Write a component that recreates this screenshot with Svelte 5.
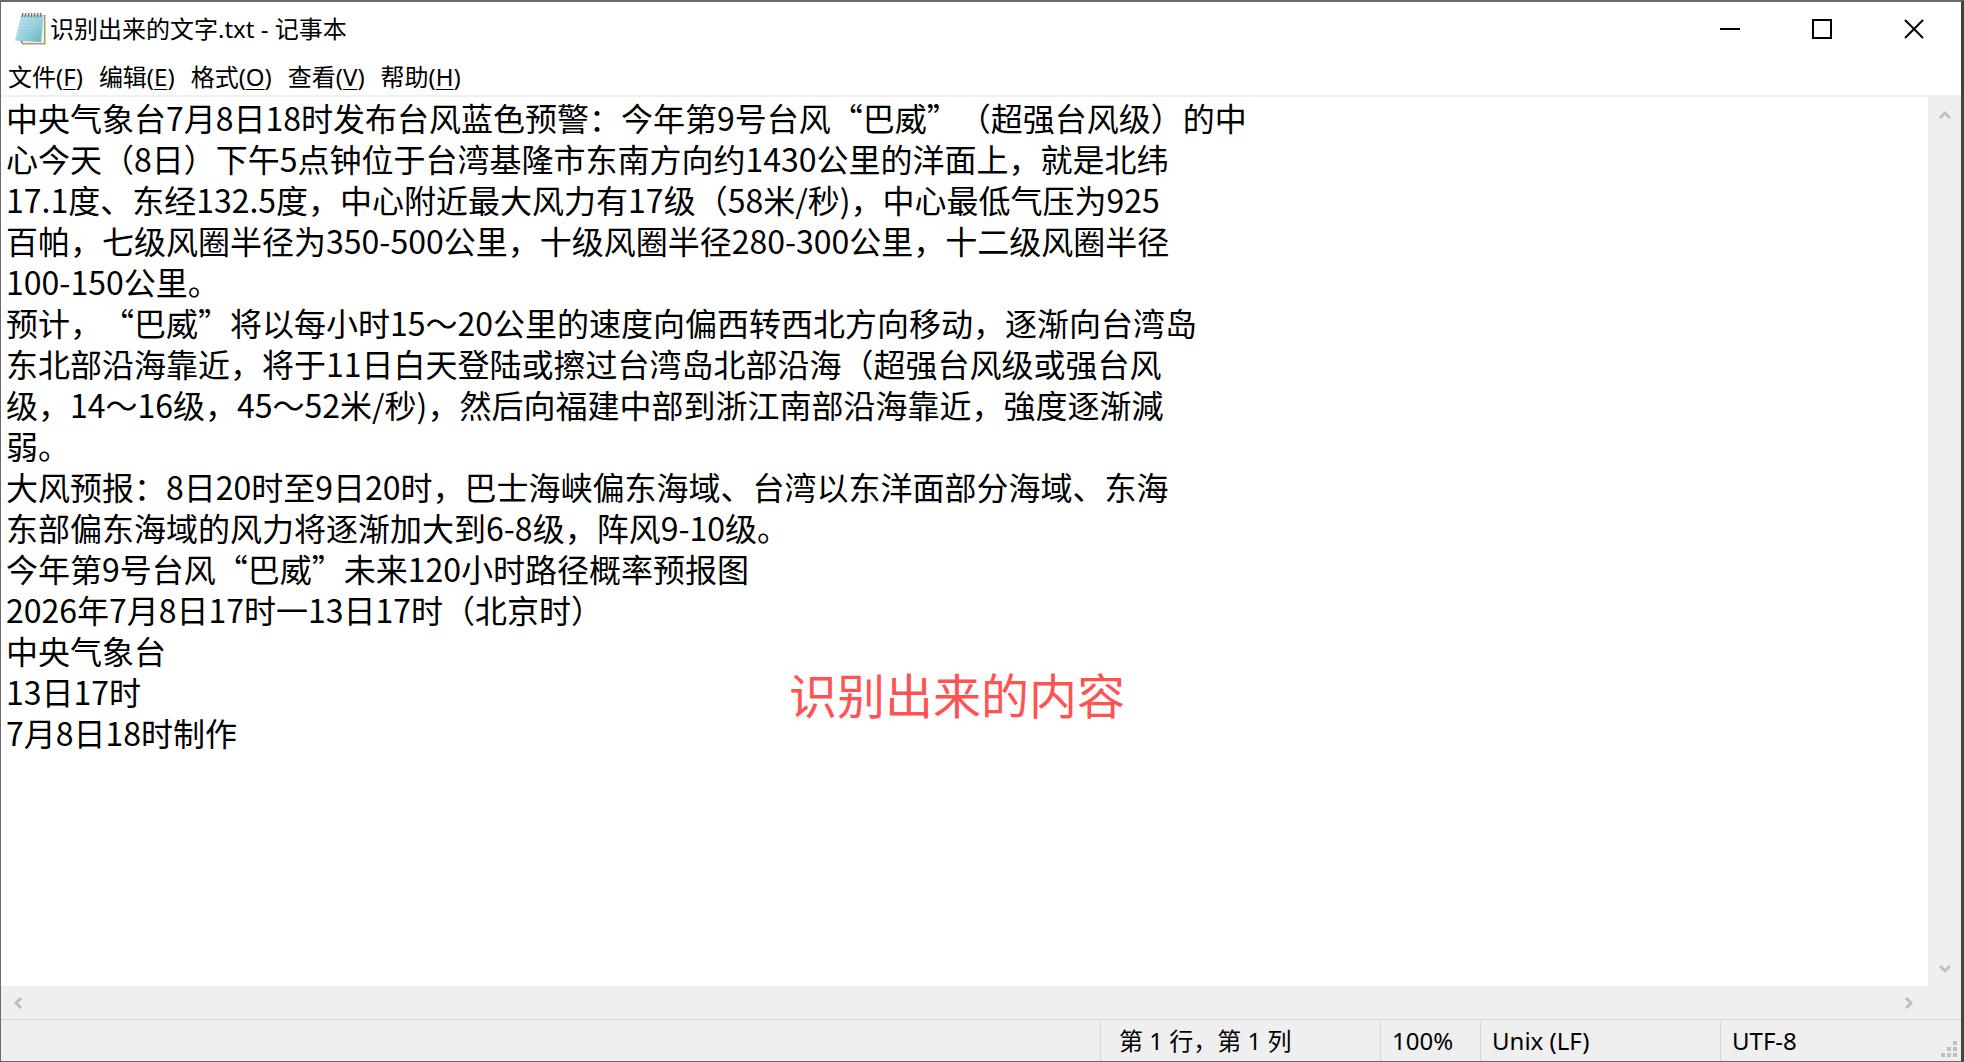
<script lang="ts">
	const menus = [
		{ label: '文件', key: 'F' },
		{ label: '编辑', key: 'E' },
		{ label: '格式', key: 'O' },
		{ label: '查看', key: 'V' },
		{ label: '帮助', key: 'H' }
	];

	let content = [
		'中央气象台7月8日18时发布台风蓝色预警：今年第9号台风“巴威”（超强台风级）的中',
		'心今天（8日）下午5点钟位于台湾基隆市东南方向约1430公里的洋面上，就是北纬',
		'17.1度、东经132.5度，中心附近最大风力有17级（58米/秒)，中心最低气压为925',
		'百帕，七级风圈半径为350-500公里，十级风圈半径280-300公里，十二级风圈半径',
		'100-150公里。',
		'预计，“巴威”将以每小时15～20公里的速度向偏西转西北方向移动，逐渐向台湾岛',
		'东北部沿海靠近，将于11日白天登陆或擦过台湾岛北部沿海（超强台风级或强台风',
		'级，14～16级，45～52米/秒)，然后向福建中部到浙江南部沿海靠近，強度逐渐減',
		'弱。',
		'大风预报：8日20时至9日20时，巴士海峡偏东海域、台湾以东洋面部分海域、东海',
		'东部偏东海域的风力将逐渐加大到6-8级，阵风9-10级。',
		'今年第9号台风“巴威”未来120小时路径概率预报图',
		'2026年7月8日17时一13日17时（北京时）',
		'中央气象台',
		'13日17时',
		'7月8日18时制作'
	].join('\n');

	const rings = [22, 25, 28, 31, 34, 37, 40];
	const rules = [14, 17, 20, 23, 26, 29, 32];
</script>

<div class="window">
	<header class="titlebar">
		<svg class="app-icon" viewBox="14 12 32 34" aria-hidden="true">
			<defs>
				<linearGradient id="sheet" x1="0" y1="0" x2="1" y2="1">
					<stop offset="0" stop-color="#c9eaf2" />
					<stop offset="0.5" stop-color="#a0d5e3" />
					<stop offset="1" stop-color="#62b0c6" />
				</linearGradient>
			</defs>
			<path d="M23 15H45.500V44.500H22L20 41Z" fill="#a89b77" />
			<path d="M24 16H44V43H23Z" fill="#f4efdd" />
			<path d="M21 15H43.500L41 42L15 40.500Z" fill="url(#sheet)" />
			{#each rules as y}
				<path d="M{22 - (y - 14) / 5} {y + 4}H{41 - (y - 14) / 10}" stroke="#8bc5d5" stroke-width="0.6" />
			{/each}
			{#each rings as x}
				<path d="M{x} 17L{x + 1} 13" stroke="#66747a" stroke-width="1.4" />
			{/each}
		</svg>
		<h1>识别出来的文字.txt - 记事本</h1>
		<div class="controls">
			<button aria-label="最小化">
				<svg viewBox="0 0 20 20"><path d="M0 10H20" /></svg>
			</button>
			<button aria-label="最大化">
				<svg viewBox="0 0 20 20"><path d="M1 1H19V19H1Z" /></svg>
			</button>
			<button aria-label="关闭">
				<svg viewBox="0 0 20 20"><path d="M1 1L19 19M19 1L1 19" /></svg>
			</button>
		</div>
	</header>

	<nav class="menubar">
		{#each menus as menu}
			<button>{menu.label}(<u>{menu.key}</u>)</button>
		{/each}
	</nav>

	<main class="editor">
		<textarea aria-label="文本编辑器" wrap="off" spellcheck="false" bind:value={content}></textarea>
		<div class="scroll vertical">
			<button aria-label="向上滚动">
				<svg viewBox="0 0 12 12"><path d="M1 9L6 4L11 9" /></svg>
			</button>
			<button aria-label="向下滚动">
				<svg viewBox="0 0 12 12"><path d="M1 3L6 8L11 3" /></svg>
			</button>
		</div>
		<div class="scroll horizontal">
			<button aria-label="向左滚动">
				<svg viewBox="0 0 12 12"><path d="M9 1L4 6L9 11" /></svg>
			</button>
			<button aria-label="向右滚动">
				<svg viewBox="0 0 12 12"><path d="M3 1L8 6L3 11" /></svg>
			</button>
		</div>
		<div class="corner"></div>
		<p class="note">识别出来的内容</p>
	</main>

	<footer class="statusbar">
		<span class="position">第 1 行，第 1 列</span>
		<span>100%</span>
		<span>Unix (LF)</span>
		<span>UTF-8</span>
		<svg class="grip" viewBox="0 0 16 16" aria-hidden="true">
			<path d="M12 0h4v4h-4zM6 6h4v4H6zM12 6h4v4h-4zM0 12h4v4H0zM6 12h4v4H6zM12 12h4v4h-4z" />
		</svg>
	</footer>
</div>

<style>
	:global(body) {
		margin: 0;
		background: #fff;
	}

	.window {
		box-sizing: border-box;
		display: flex;
		flex-direction: column;
		height: 100vh;
		border-style: solid;
		border-width: 2px 3px 1px 1px;
		border-color: #6b6969 #444344 #6b6969 #6b6969;
		background: #fff;
		color: #000;
		font-family: 'Noto Sans', 'Noto Sans CJK SC', sans-serif;
		font-size: 24px;
		line-height: 32px;
	}

	button {
		display: flex;
		align-items: center;
		justify-content: center;
		padding: 0;
		border: none;
		background: transparent;
		color: inherit;
		font: inherit;
	}

	.titlebar {
		display: flex;
		align-items: center;
		height: 54px;
		padding: 0 1px 0 13px;
	}

	.app-icon {
		width: 32px;
		height: 34px;
	}

	h1 {
		flex: 1;
		margin: 0 0 0 4px;
		font-size: 24px;
		font-weight: 400;
	}

	.controls {
		display: flex;
		align-self: stretch;
	}

	.controls button {
		width: 92px;
	}

	.controls button:hover {
		background: #e5e5e5;
	}

	.controls svg {
		width: 20px;
		height: 20px;
		fill: none;
		stroke: #000;
		stroke-width: 2;
	}

	.menubar {
		display: flex;
		gap: 16px;
		height: 37px;
		padding: 2px 0 0 7px;
		border-bottom: 2px solid #f0f0f0;
	}

	u {
		text-decoration-thickness: 1px;
		text-underline-offset: 3px;
	}

	.editor {
		position: relative;
		flex: 1;
		display: grid;
		grid-template-columns: 1fr 33px;
		grid-template-rows: 1fr 33px;
		min-height: 0;
	}

	textarea {
		padding: 0 5px;
		border: none;
		outline: none;
		resize: none;
		overflow: hidden;
		background: #fff;
		color: #000;
		font-family: 'Noto Sans CJK SC', sans-serif;
		font-size: 32px;
		line-height: 41px;
		text-spacing-trim: space-all;
	}

	.scroll {
		display: flex;
		justify-content: space-between;
		background: #efefef;
	}

	.scroll button {
		width: 33px;
		height: 33px;
	}

	.scroll svg {
		width: 12px;
		height: 12px;
		fill: none;
		stroke: #bfbfbf;
		stroke-width: 3;
	}

	.vertical {
		flex-direction: column;
		padding: 1px 0;
	}

	.horizontal {
		padding-right: 3px;
	}

	.corner {
		background: #efefef;
	}

	.note {
		position: absolute;
		top: 567px;
		left: 788px;
		margin: 0;
		color: #ff5252;
		font-size: 48px;
		line-height: 64px;
		pointer-events: none;
	}

	.statusbar {
		box-sizing: border-box;
		position: relative;
		display: grid;
		grid-template-columns: 280px 100px 240px 241px;
		justify-content: end;
		height: 42px;
		padding: 1px 0;
		border-top: 1px solid #d7d7d7;
		background: #efefef;
	}

	.statusbar span {
		padding: 4px 11px;
		border-left: 1px solid #d7d7d7;
		white-space: nowrap;
	}

	.statusbar .position {
		padding-left: 18px;
	}

	.grip {
		position: absolute;
		right: 4px;
		bottom: 4px;
		width: 16px;
		height: 16px;
		fill: #bfbfbf;
	}
</style>
